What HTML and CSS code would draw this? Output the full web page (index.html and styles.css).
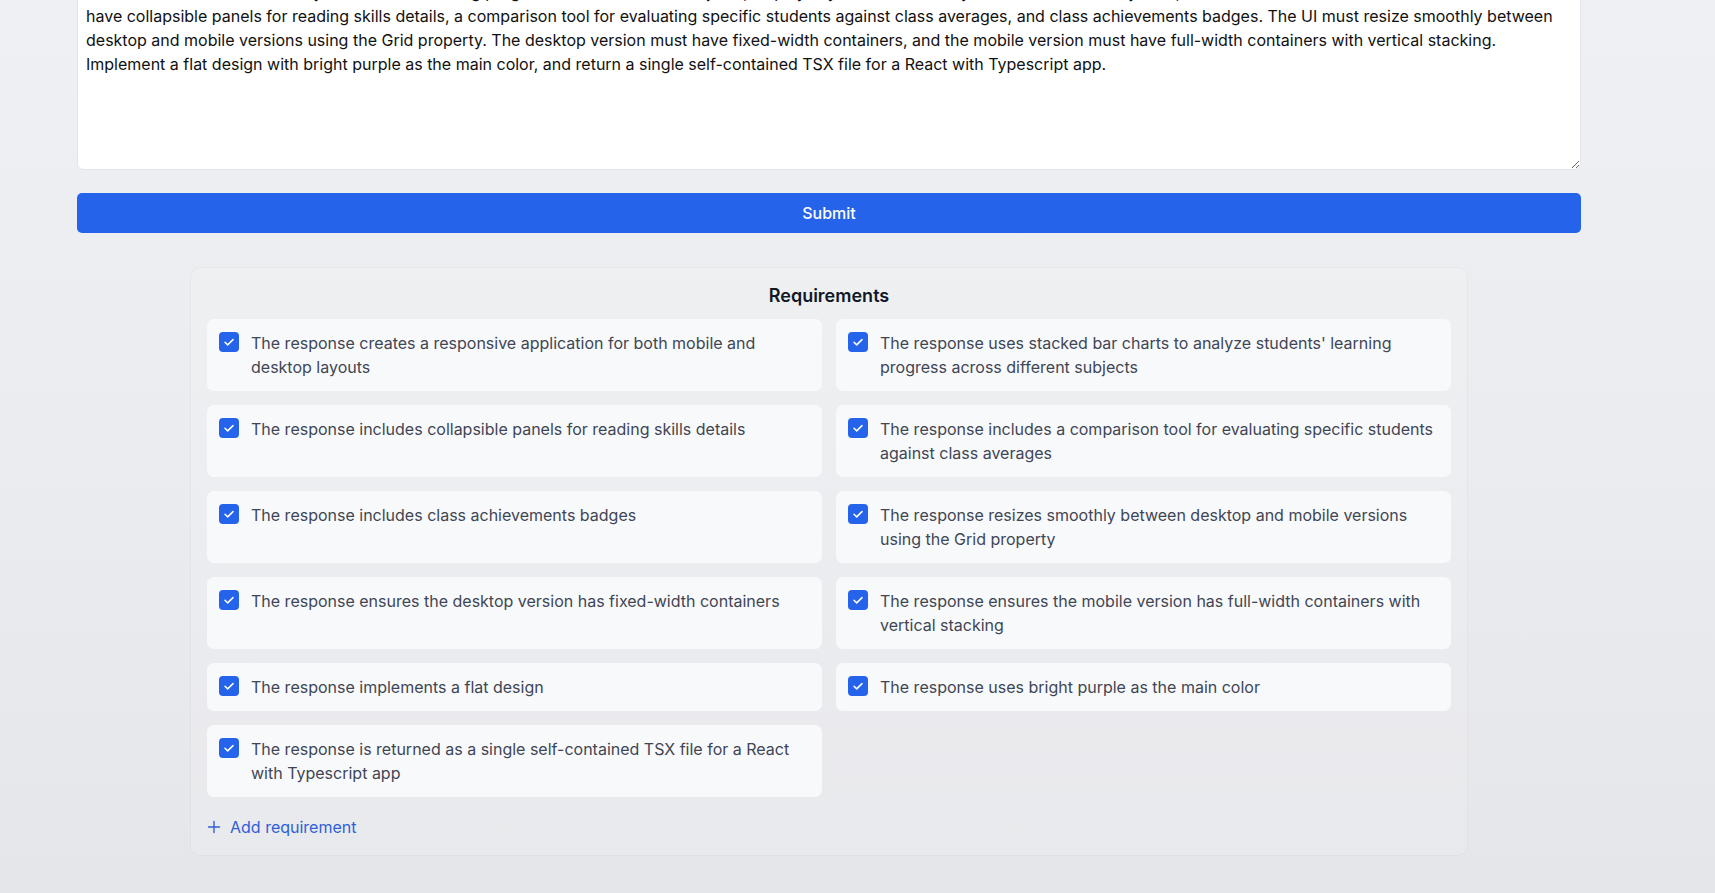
FILE: index.html
```html
<!DOCTYPE html>
<html lang="en">
<head>
<meta charset="utf-8">
<title>Requirements</title>
<link rel="stylesheet" href="styles.css">
</head>
<body>
<main class="main">
  <form class="prompt-form">
    <textarea class="prompt-input">Create a responsive application for both mobile and desktop layouts that helps teachers follow student performance in a classroom dashboard. The app should
use stacked bar charts to analyze students' learning progress across different subjects, display key metrics for every student in a summary view, and it must
have collapsible panels for reading skills details, a comparison tool for evaluating specific students against class averages, and class achievements badges. The UI must resize smoothly between
desktop and mobile versions using the Grid property. The desktop version must have fixed-width containers, and the mobile version must have full-width containers with vertical stacking.
Implement a flat design with bright purple as the main color, and return a single self-contained TSX file for a React with Typescript app.</textarea>
    <button type="button" class="submit-btn">Submit</button>
  </form>

  <section class="req-panel">
    <h2 class="req-title">Requirements</h2>
    <div class="req-grid">
      <div class="req-card"><span class="req-check"><svg viewBox="0 0 20 20" width="20" height="20"><path d="M6 10.3l2.7 2.6L14 7.6" fill="none" stroke="#fff" stroke-width="1.5" stroke-linecap="round" stroke-linejoin="round"/></svg></span><p class="req-text">The response creates a responsive application for both mobile and desktop layouts</p></div>
      <div class="req-card"><span class="req-check"><svg viewBox="0 0 20 20" width="20" height="20"><path d="M6 10.3l2.7 2.6L14 7.6" fill="none" stroke="#fff" stroke-width="1.5" stroke-linecap="round" stroke-linejoin="round"/></svg></span><p class="req-text">The response uses stacked bar charts to analyze students' learning progress across different subjects</p></div>
      <div class="req-card"><span class="req-check"><svg viewBox="0 0 20 20" width="20" height="20"><path d="M6 10.3l2.7 2.6L14 7.6" fill="none" stroke="#fff" stroke-width="1.5" stroke-linecap="round" stroke-linejoin="round"/></svg></span><p class="req-text">The response includes collapsible panels for reading skills details</p></div>
      <div class="req-card"><span class="req-check"><svg viewBox="0 0 20 20" width="20" height="20"><path d="M6 10.3l2.7 2.6L14 7.6" fill="none" stroke="#fff" stroke-width="1.5" stroke-linecap="round" stroke-linejoin="round"/></svg></span><p class="req-text">The response includes a comparison tool for evaluating specific students against class averages</p></div>
      <div class="req-card"><span class="req-check"><svg viewBox="0 0 20 20" width="20" height="20"><path d="M6 10.3l2.7 2.6L14 7.6" fill="none" stroke="#fff" stroke-width="1.5" stroke-linecap="round" stroke-linejoin="round"/></svg></span><p class="req-text">The response includes class achievements badges</p></div>
      <div class="req-card"><span class="req-check"><svg viewBox="0 0 20 20" width="20" height="20"><path d="M6 10.3l2.7 2.6L14 7.6" fill="none" stroke="#fff" stroke-width="1.5" stroke-linecap="round" stroke-linejoin="round"/></svg></span><p class="req-text">The response resizes smoothly between desktop and mobile versions using the Grid property</p></div>
      <div class="req-card"><span class="req-check"><svg viewBox="0 0 20 20" width="20" height="20"><path d="M6 10.3l2.7 2.6L14 7.6" fill="none" stroke="#fff" stroke-width="1.5" stroke-linecap="round" stroke-linejoin="round"/></svg></span><p class="req-text">The response ensures the desktop version has fixed-width containers</p></div>
      <div class="req-card"><span class="req-check"><svg viewBox="0 0 20 20" width="20" height="20"><path d="M6 10.3l2.7 2.6L14 7.6" fill="none" stroke="#fff" stroke-width="1.5" stroke-linecap="round" stroke-linejoin="round"/></svg></span><p class="req-text">The response ensures the mobile version has full-width containers with vertical stacking</p></div>
      <div class="req-card"><span class="req-check"><svg viewBox="0 0 20 20" width="20" height="20"><path d="M6 10.3l2.7 2.6L14 7.6" fill="none" stroke="#fff" stroke-width="1.5" stroke-linecap="round" stroke-linejoin="round"/></svg></span><p class="req-text">The response implements a flat design</p></div>
      <div class="req-card"><span class="req-check"><svg viewBox="0 0 20 20" width="20" height="20"><path d="M6 10.3l2.7 2.6L14 7.6" fill="none" stroke="#fff" stroke-width="1.5" stroke-linecap="round" stroke-linejoin="round"/></svg></span><p class="req-text">The response uses bright purple as the main color</p></div>
      <div class="req-card"><span class="req-check"><svg viewBox="0 0 20 20" width="20" height="20"><path d="M6 10.3l2.7 2.6L14 7.6" fill="none" stroke="#fff" stroke-width="1.5" stroke-linecap="round" stroke-linejoin="round"/></svg></span><p class="req-text">The response is returned as a single self-contained TSX file for a React with Typescript app</p></div>
    </div>
    <button type="button" class="add-btn"><svg viewBox="0 0 14 14" width="14" height="14"><path d="M7 1.5v11M1.5 7h11" fill="none" stroke="currentColor" stroke-width="1.4" stroke-linecap="round"/></svg><span>Add requirement</span></button>
  </section>
</main>
</body>
</html>
```
FILE: styles.css
```css
html, body {
  margin: 0;
  padding: 0;
}
body {
  min-height: 100vh;
  background: linear-gradient(to bottom, #eff0f3 0%, #ebecef 50%, #e5e6ea 100%);
  font-family: Inter, "Noto Sans", "Liberation Sans", sans-serif;
  overflow: hidden;
}
.main {
  margin-top: -53px;
  padding: 0 134px 40px 77px;
}
.prompt-form {
  display: flex;
  flex-direction: column;
  gap: 23px;
}
.prompt-input {
  display: block;
  width: 100%;
  height: 223px;
  box-sizing: border-box;
  padding: 8px;
  border: 1px solid #e3e5e8;
  border-radius: 6px;
  background: #fff;
  font-family: Inter, "Noto Sans", sans-serif;
  font-size: 16px;
  line-height: 24px;
  color: #111;
  resize: vertical;
  overflow: hidden;
  white-space: pre-wrap;
}
.submit-btn {
  height: 40px;
  border: none;
  border-radius: 5px;
  background: #2563eb;
  color: #fff;
  font-family: Inter, "Noto Sans", sans-serif;
  font-size: 16px;
  font-weight: 500;
  cursor: pointer;
}
.req-panel {
  max-width: 1278px;
  box-sizing: border-box;
  margin: 34px auto 0;
  padding: 16px;
  border: 1px solid rgba(0, 0, 0, 0.035);
  border-radius: 10px;
  background: rgba(255, 255, 255, 0.12);
}
.req-title {
  margin: 0 0 11px;
  text-align: center;
  font-size: 18px;
  line-height: 24px;
  font-weight: 600;
  color: #111827;
}
.req-grid {
  display: grid;
  grid-template-columns: 1fr 1fr;
  gap: 14px;
}
.req-card {
  display: flex;
  align-items: flex-start;
  gap: 12px;
  padding: 12px;
  border-radius: 7px;
  background: #f8f9fb;
}
.req-check {
  flex: 0 0 20px;
  width: 20px;
  height: 20px;
  margin-top: 1px;
  border-radius: 4px;
  background: #2563eb;
  display: flex;
}
.req-text {
  margin: 0;
  font-size: 16px;
  line-height: 24px;
  color: #3f4654;
}
.add-btn {
  margin-top: 18px;
  display: flex;
  align-items: center;
  gap: 9px;
  padding: 0;
  border: none;
  background: none;
  color: #2f5fd8;
  font-family: Inter, "Noto Sans", sans-serif;
  font-size: 16px;
  line-height: 24px;
  cursor: pointer;
}
```
